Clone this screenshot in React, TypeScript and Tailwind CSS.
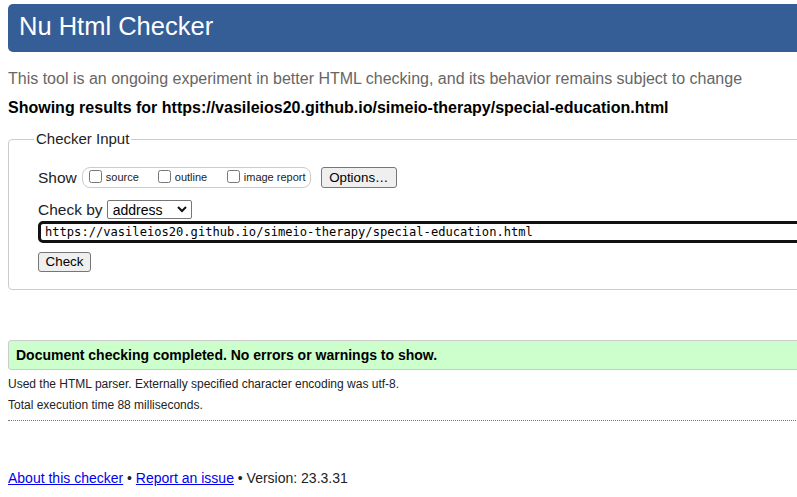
import { useState } from 'react';

const SANS = "font-['Liberation_Sans',Arial,sans-serif]";

function ShowOption({ label, wide = true }: { label: string; wide?: boolean }) {
  const [checked, setChecked] = useState(false);
  return (
    <label className={`flex items-center ${wide ? 'w-[69px]' : ''}`}>
      <input
        type="checkbox"
        checked={checked}
        onChange={(e) => setChecked(e.target.checked)}
        className="m-0 mb-[3px] h-[13px] w-[13px] shrink-0"
      />
      <span className="ml-[4px] text-[11px] leading-[13px] text-[#222]">{label}</span>
    </label>
  );
}

export default function App() {
  const [by, setBy] = useState('address');
  const [url, setUrl] = useState(
    'https://vasileios20.github.io/simeio-therapy/special-education.html'
  );

  return (
    <div className={`h-[497px] w-[797px] overflow-hidden bg-white ${SANS}`}>
      <div className="w-[840px] pl-[8px] pt-[4px]">
        {/* Title bar */}
        <h1 className="flex h-[48px] items-center rounded-l-[5px] bg-[#365e96] pb-[2px] pl-[11px] text-[25.5px] leading-none font-normal text-white">
          Nu Html Checker
        </h1>

        <p className="mt-[18px] text-[16px] leading-[18px] text-[#666]">
          This tool is an ongoing experiment in better HTML checking, and its behavior remains subject to change
        </p>
        <p className="mt-[11px] text-[16px] leading-[18px] font-bold text-black">
          Showing results for https://vasileios20.github.io/simeio-therapy/special-education.html
        </p>

        {/* Checker input */}
        <fieldset className="mt-[13px] rounded-[4px] border border-[#ccc] pb-[17px] pl-[29px]">
          <legend className="-ml-[4px] px-[2px] text-[15px] leading-[18px] text-[#222]">
            Checker Input
          </legend>

          <div className="mt-[19px] flex h-[21px] items-center">
            <span className="text-[15.5px] text-[#222]">Show</span>
            <div className="ml-[5px] flex h-[21px] w-[229px] items-center rounded-[8px] border border-[#ccc] pl-[6px]">
              <ShowOption label="source" />
              <ShowOption label="outline" />
              <ShowOption label="image report" wide={false} />
            </div>
            <button
              type="button"
              className="ml-[10px] h-[21px] w-[76px] rounded-[3px] border border-[#767676] bg-[#efefef] text-center text-[13.33px] leading-none text-black"
            >
              Options…
            </button>
          </div>

          <div className="mt-[12px] flex h-[19px] items-center">
            <span className="text-[15.5px] text-[#222]">Check by</span>
            <div className="relative ml-[4px]">
              <select
                value={by}
                onChange={(e) => setBy(e.target.value)}
                className="block h-[19px] w-[85px] appearance-none rounded-[2px] border border-[#767676] bg-white pl-[5px] text-[14px] leading-none text-black"
              >
                <option value="address">address</option>
                <option value="file">file upload</option>
                <option value="text">text input</option>
              </select>
              <svg
                viewBox="0 0 10 7"
                className="pointer-events-none absolute top-[6px] right-[5px] h-[7px] w-[10px]"
                fill="none"
                stroke="#111"
                strokeWidth="2"
              >
                <polyline points="1,1 5,5 9,1" />
              </svg>
            </div>
          </div>

          <input
            type="url"
            value={url}
            onChange={(e) => setUrl(e.target.value)}
            className="mt-[2px] block h-[22px] w-[790px] rounded-[5px] border-[3px] border-[#111] bg-white pl-[4px] font-['DejaVu_Sans_Mono',monospace] text-[12.1px] leading-none text-black outline-none"
          />

          <button
            type="submit"
            className="mt-[9px] block h-[20px] w-[53px] rounded-[3px] border border-[#767676] bg-[#efefef] text-center text-[13.33px] leading-none text-black"
          >
            Check
          </button>
        </fieldset>

        {/* Result */}
        <div className="mt-[50px] flex h-[30px] items-center rounded-l-[3px] border border-[#ccc] bg-[#ccffcc] pl-[7px]">
          <span className="text-[14px] leading-[16px] font-bold text-black">
            Document checking completed. No errors or warnings to show.
          </span>
        </div>

        <p className="mt-[7px] text-[12px] leading-[14px] text-[#222]">
          Used the HTML parser. Externally specified character encoding was utf-8.
        </p>
        <p className="mt-[7px] text-[12px] leading-[14px] text-[#222]">
          Total execution time 88 milliseconds.
        </p>

        <hr className="mt-[8px] border-0 border-t border-dotted border-[#777]" />

        <p className="mt-[49px] text-[14px] leading-[16px] text-[#222]">
          <a href="#about" className="text-[#0000ee] underline">
            About this checker
          </a>{' '}
          •{' '}
          <a href="#issue" className="text-[#0000ee] underline">
            Report an issue
          </a>{' '}
          • Version: 23.3.31
        </p>
      </div>
    </div>
  );
}
